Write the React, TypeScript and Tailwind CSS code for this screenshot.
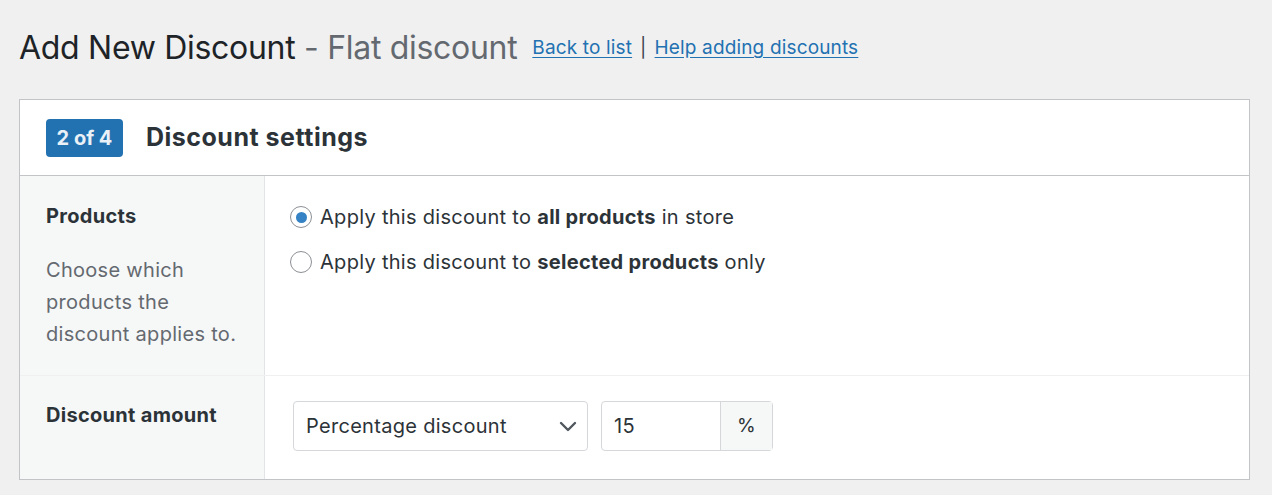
import React from "react";

export default function App() {
  return (
    <div
      className="min-h-[495px] bg-[#f0f0f1] px-[19px] pt-[28px] text-[#1d2327]"
      style={{ fontFamily: "Inter, 'Noto Sans', sans-serif" }}
    >
      <div className="flex items-center">
        <h1 className="text-[32px] leading-[40px] font-normal tracking-[-0.3px]">
          Add New Discount <span className="text-[#646970]">- Flat discount</span>
        </h1>
        <div className="ml-[15px] mt-[1px] flex items-center text-[19px] tracking-[0.15px] text-[#2271b1]">
          <a href="#" className="underline underline-offset-[3px]">Back to list</a>
          <span className="mx-[8px] text-[#3c434a]">|</span>
          <a href="#" className="underline underline-offset-[3px]">Help adding discounts</a>
        </div>
      </div>

      <div className="mt-[31px] w-[1231px] border border-[#c3c4c7] bg-white">
        <div className="flex h-[76px] items-center border-b border-[#c3c4c7] px-[26px]">
          <span className="flex h-[38px] w-[77px] items-center justify-center rounded-[4px] bg-[#2271b1] text-[20px] font-bold text-white/90">
            2 of 4
          </span>
          <h2 className="ml-[23px] text-[25px] font-bold tracking-[0.5px] text-[#2c3338]">Discount settings</h2>
        </div>

        <div className="flex border-b border-[#f0f0f1] text-[20px] tracking-[0.3px]">
          <div className="w-[245px] border-r border-[#e2e4e7] bg-[#f6f7f7] px-[26px] pt-[27px] pb-[25px]">
            <div className="font-bold leading-[26px] text-[#2c3338]">Products</div>
            <p className="mt-[25px] leading-[32px] text-[#646970]">
              Choose which products the discount applies to.
            </p>
          </div>
          <div className="flex flex-col gap-[13px] px-[25px] pt-[25px] leading-[32px] text-[#2c3338]">
            <label className="flex items-center">
              <span className="flex h-[22px] w-[22px] items-center justify-center rounded-full border border-[#8c8f94] bg-white">
                <span className="h-[11px] w-[11px] rounded-full bg-[#3582c4]" />
              </span>
              <span className="ml-[8px]">
                Apply this discount to <b className="font-bold">all products</b> in store
              </span>
            </label>
            <label className="flex items-center">
              <span className="h-[22px] w-[22px] rounded-full border border-[#8c8f94] bg-white" />
              <span className="ml-[8px]">
                Apply this discount to <b className="font-bold">selected products</b> only
              </span>
            </label>
          </div>
        </div>

        <div className="flex text-[20px] tracking-[0.3px]">
          <div className="w-[245px] border-r border-[#e2e4e7] bg-[#f6f7f7] px-[26px] pt-[26px] pb-[28px]">
            <div className="font-bold leading-[26px] text-[#2c3338]">Discount amount</div>
          </div>
          <div className="flex items-start gap-[13px] pl-[28px] pr-[27px] pt-[25px] pb-[28px]">
            <div className="flex h-[50px] w-[295px] items-center justify-between rounded-[4px] border border-[#d5d7db] bg-white pl-[12px] pr-[10px] text-[#2c3338]">
              <span>Percentage discount</span>
              <svg width="18" height="12" viewBox="0 0 18 12" fill="none" stroke="#50575e" strokeWidth="2.4" strokeLinecap="round" strokeLinejoin="round">
                <path d="M2 3l7 7 7-7" />
              </svg>
            </div>
            <div className="flex h-[50px] w-[172px] rounded-[4px] border border-[#d5d7db] bg-white text-[#2c3338]">
              <div className="flex flex-1 items-center pl-[12px]">15</div>
              <div className="flex w-[52px] items-center justify-center border-l border-[#d5d7db] bg-[#f6f7f7] text-[19px]">%</div>
            </div>
          </div>
        </div>
      </div>
    </div>
  );
}
